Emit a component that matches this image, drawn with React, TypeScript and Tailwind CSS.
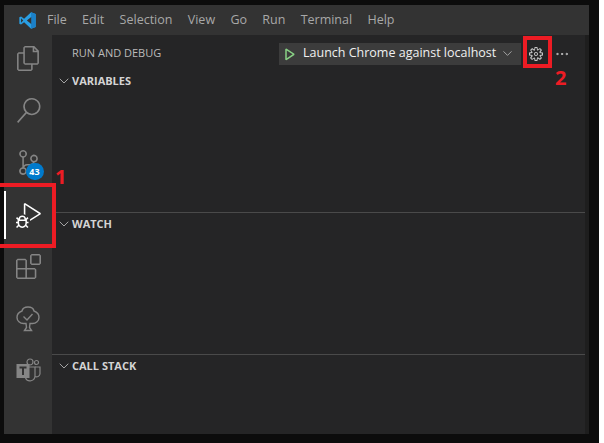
import { ChevronDown, Ellipsis } from "lucide-react";
import { VscDebugAlt, VscFiles, VscGear, VscSearch, VscSourceControl, VscExtensions, VscDebugStart } from "react-icons/vsc";

const menu = ["File", "Edit", "Selection", "View", "Go", "Run", "Terminal", "Help"];

const Logo = () => (
  <svg width="17" height="17" viewBox="0 0 100 100" className="shrink-0">
    <path d="M71 99 30 60 12 74 2 69V31l10-5 18 14L71 1l27 11v76z" fill="#2a9fe4" />
    <path d="M71 1l27 11v76L71 99z" fill="#1b80c8" />
    <path d="M72 29 46 50l26 21z M12 37v26l13-13z" fill="#333333" />
  </svg>
);

const Tree = () => (
  <svg width="24" height="26" viewBox="0 0 24 26" fill="none" stroke="#858585" strokeWidth="1.4">
    <path d="M12 1c3 0 5.500 1.500 6 4 3 1 5 3.500 5 6.500 0 3.500-3 6-6.500 6H14l-.5 4 2 3h-7l2-3-.5-4H7.500C4 17.500 1 15 1 11.500 1 8.500 3 6 6 5c.5-2.500 3-4 6-4z" />
    <path d="M7.500 10.500 11 14l5.500-6" />
  </svg>
);

const Teams = () => (
  <svg width="25" height="24" viewBox="0 0 25 24" fill="none" stroke="#858585" strokeWidth="1.2">
    <circle cx="14" cy="4" r="3" />
    <circle cx="20.500" cy="4.500" r="2" />
    <path d="M10 9h9v9a5 5 0 0 1-9.500 2" />
    <path d="M19 9h5v7a3.500 3.500 0 0 1-5 2.500" />
    <rect x="0.500" y="6" width="13" height="14" fill="#858585" stroke="none" />
    <path d="M3.500 9.500h7M7 9.500V17" stroke="#333333" strokeWidth="2" />
  </svg>
);

const SectionHead = ({ title }: { title: string }) => (
  <div className="flex h-[22px] items-center pl-[4px] text-[11px] font-bold text-[#d4d4d4]">
    <ChevronDown size={16} strokeWidth={1.2} className="text-[#c5c5c5]" />
    <span>{title}</span>
  </div>
);

const Section = ({ title, grow }: { title: string; grow?: boolean }) => (
  <div className={`${grow ? "flex-1" : "h-[142px]"} border-t border-[#4a4a4a]`}>
    <SectionHead title={title} />
  </div>
);

export default function App() {
  return (
    <div className="relative h-[443px] w-[604px] overflow-hidden bg-white font-['Open_Sans','Noto_Sans',sans-serif]">
      <div className="h-full w-[599px] bg-[#0c0c0c] pl-[4px] pt-[5px]">
        <div className="flex h-[429px] w-[585px] flex-col bg-[#1e1e1e]">
          {/* title bar */}
          <div className="flex h-[30px] items-center bg-[#333333] pl-[15px] text-[12.5px] text-[#a8a8a8]">
            <Logo />
            <div className="ml-[11px] flex gap-[15.3px]">
              {menu.map((m) => (
                <span key={m}>{m}</span>
              ))}
            </div>
          </div>

          <div className="flex min-h-0 flex-1">
            {/* activity bar */}
            <div className="flex w-[48px] flex-col items-center bg-[#333333] pt-[11px] text-[#858585]">
              <div className="h-[52px]"><VscFiles size={25} /></div>
              <div className="h-[52px]"><VscSearch size={25} /></div>
              <div className="relative h-[52px]">
                <VscSourceControl size={25} />
                <span className="absolute left-[10px] top-[13px] flex h-[17px] w-[18px] items-center justify-center rounded-full bg-[#007acc] text-[9px] font-bold text-white">
                  43
                </span>
              </div>
              <div className="h-[52px] pl-[1px] pt-[1px] text-white"><VscDebugAlt size={25} /></div>
              <div className="h-[52px]"><VscExtensions size={25} /></div>
              <div className="h-[52px]"><Tree /></div>
              <div className="h-[52px]"><Teams /></div>
            </div>

            {/* debug side bar */}
            <div className="flex w-[533px] flex-col bg-[#252526]">
              <div className="flex h-[36px] items-center pl-[20px] pr-[15px] pt-[1px]">
                <span className="text-[11px] text-[#bbbbbb]">RUN AND DEBUG</span>
                <div className="ml-auto flex h-[22px] w-[242px] items-center bg-[#3c3c3c] pl-[2px] pr-[6px] text-[12.5px] text-[#f0f0f0]">
                  <VscDebugStart size={16} className="text-[#89d185]" />
                  <span className="ml-[6px] whitespace-nowrap">Launch Chrome against localhost</span>
                  <ChevronDown size={15} strokeWidth={1.2} className="ml-auto text-[#c5c5c5]" />
                </div>
                <div className="ml-[7px] flex w-[16px] justify-center">
                  <VscGear size={16} className="text-[#c5c5c5]" />
                </div>
                <div className="ml-[10px] flex w-[16px] justify-center">
                  <Ellipsis size={16} strokeWidth={1.5} className="text-[#c5c5c5]" />
                </div>
              </div>
              <div className="-mt-[1px]">
                <SectionHead title="VARIABLES" />
              </div>
              <div className="h-[120px]" />
              <Section title="WATCH" />
              <Section title="CALL STACK" grow />
            </div>
          </div>
        </div>
      </div>

      {/* annotations from the screenshot */}
      <div className="absolute left-[-4px] top-[183px] h-[65px] w-[60px] border-4 border-[#ed1c24]" />
      <div className="absolute left-[4px] top-[191px] h-[48px] w-[2px] bg-white" />
      <div className="absolute left-[523px] top-[36px] h-[32px] w-[29px] border-4 border-[#ed1c24]" />
      <span className="absolute left-[55px] top-[164px] text-[20px] font-bold leading-[26px] text-[#ed1c24]">1</span>
      <span className="absolute left-[555px] top-[65px] text-[20px] font-bold leading-[26px] text-[#ed1c24]">2</span>
    </div>
  );
}
